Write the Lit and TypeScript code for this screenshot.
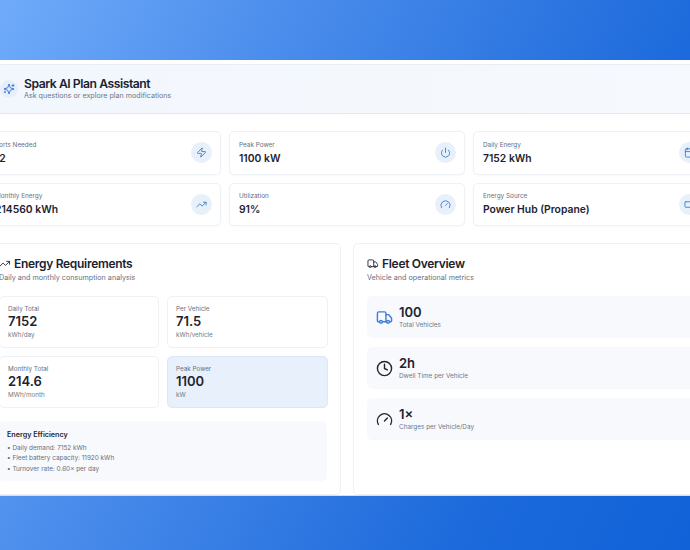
import { LitElement, html, css, svg } from "lit";
import { customElement } from "lit/decorators.js";

const ic = (body: unknown, cls = "") => html`<svg class=${cls} viewBox="0 0 24 24" fill="none" stroke="currentColor" stroke-width="2" stroke-linecap="round" stroke-linejoin="round">${body}</svg>`;
const zap = svg`<path d="M4 14a1 1 0 0 1-.78-1.63l9.9-10.2a.5.5 0 0 1 .86.46l-1.92 6.02A1 1 0 0 0 13 10h7a1 1 0 0 1 .78 1.63l-9.9 10.2a.5.5 0 0 1-.86-.46l1.92-6.02A1 1 0 0 0 11 14z"/>`;
const power = svg`<path d="M12 2v10"/><path d="M18.4 6.6a9 9 0 1 1-12.77.04"/>`;
const cal = svg`<path d="M8 2v4"/><path d="M16 2v4"/><rect x="3" y="4" width="18" height="18" rx="2"/><path d="M3 10h18"/>`;
const trend = svg`<path d="M22 7 13.5 15.5 8.5 10.5 2 17"/><path d="M16 7h6v6"/>`;
const gauge = svg`<path d="m12 14 4-4"/><path d="M3.34 19a10 10 0 1 1 17.32 0"/>`;
const plug = svg`<rect x="2" y="6" width="14" height="12" rx="2"/><path d="M22 11v2"/>`;
const truck = svg`<path d="M14 18V6a2 2 0 0 0-2-2H4a2 2 0 0 0-2 2v11a1 1 0 0 0 1 1h2"/><path d="M15 18H9"/><path d="M19 18h2a1 1 0 0 0 1-1v-3.65a1 1 0 0 0-.22-.62l-3.48-4.35A1 1 0 0 0 17.52 8H14"/><circle cx="17" cy="18" r="2"/><circle cx="7" cy="18" r="2"/>`;
const clock = svg`<circle cx="12" cy="12" r="10"/><path d="M12 6v6l4 2"/>`;
const sparkles = svg`<path d="M9.937 15.5A2 2 0 0 0 8.5 14.063l-6.135-1.582a.5.5 0 0 1 0-.962L8.5 9.936A2 2 0 0 0 9.937 8.5l1.582-6.135a.5.5 0 0 1 .963 0L14.063 8.5A2 2 0 0 0 15.5 9.937l6.135 1.581a.5.5 0 0 1 0 .964L15.5 14.063a2 2 0 0 0-1.437 1.437l-1.582 6.135a.5.5 0 0 1-.963 0z"/><path d="M20 3v4"/><path d="M22 5h-4"/><path d="M4 17v2"/><path d="M5 18H3"/>`;
const chevron = svg`<path d="m6 9 6 6 6-6"/>`;

const stats: [string, string, unknown][] = [
  ["Ports Needed", "12", zap],
  ["Peak Power", "1100 kW", power],
  ["Daily Energy", "7152 kWh", cal],
  ["Monthly Energy", "214560 kWh", trend],
  ["Utilization", "91%", gauge],
  ["Energy Source", "Power Hub (Propane)", plug],
];
const tiles = [
  ["Daily Total", "7152", "kWh/day", false],
  ["Per Vehicle", "71.5", "kWh/vehicle", false],
  ["Monthly Total", "214.6", "MWh/month", false],
  ["Peak Power", "1100", "kW", true],
] as const;
const fleet: [unknown, string, string, string][] = [
  [truck, "100", "Total Vehicles", "blue"],
  [clock, "2h", "Dwell Time per Vehicle", ""],
  [gauge, "1×", "Charges per Vehicle/Day", ""],
];

@customElement("app-root")
export class AppRoot extends LitElement {
  static styles = css`
    :host {
      display: block;
      width: 690px;
      height: 550px;
      overflow: hidden;
      font-family: Inter, "Liberation Sans", sans-serif;
      color: #1a202c;
      background: linear-gradient(115deg, #70abfa 0%, #4c8eec 30%, #2a74e0 62%, #1c6adc 75%, #1162d8 100%);
    }
    .panel {
      box-sizing: border-box;
      width: 724px;
      height: 436px;
      margin: 60px 0 0 -15px;
      background: #fff;
      padding-top: 4px;
      display: flex;
      flex-direction: column;
      border-bottom: 1px solid #cfe2f8;
    }
    svg { display: block; flex: none; }
    .header {
      height: 49.5px;
      box-sizing: border-box;
      display: flex;
      align-items: center;
      gap: 6.5px;
      padding: 0 8px 0 14.5px;
      background: linear-gradient(90deg, #f2f7fd, #f6f9fe);
      border-top: 1px solid #e8eef6;
      border-bottom: 1px solid #dfe7f2;
    }
    .spark {
      width: 18px;
      height: 18px;
      border-radius: 50%;
      background: #e6eefa;
      color: #3b7de0;
      display: flex;
      align-items: center;
      justify-content: center;
    }
    .spark svg { width: 12px; height: 12px; }
    .htext { flex: 1; margin-top: -2px; }
    .title { font-size: 12.2px; font-weight: 600; line-height: 15px; letter-spacing: -0.46px; color: #1b2230; }
    .sub { font-size: 7.15px; line-height: 9px; color: #6b7686; }
    .chev { width: 12px; height: 12px; color: #4c5665; margin-right: 1px; }
    .stats {
      display: grid;
      grid-template-columns: repeat(3, 236px);
      gap: 8px;
      margin-top: 17.5px;
    }
    .stat {
      box-sizing: border-box;
      height: 43.5px;
      border: 1px solid #eef1f5;
      border-radius: 5px;
      background: #fff;
      display: flex;
      align-items: center;
      justify-content: space-between;
      padding: 0 8px 0 9px;
      box-shadow: 0 1px 2px rgba(30, 50, 80, 0.03);
    }
    .stat .label { font-size: 6.4px; line-height: 9px; color: #667080; }
    .stat .value { font-size: 10.35px; font-weight: 600; line-height: 14px; margin-top: 1px; color: #1d2430; }
    .round {
      width: 21px;
      height: 21px;
      border-radius: 50%;
      background: #e8f0fa;
      color: #3f7fd6;
      display: flex;
      align-items: center;
      justify-content: center;
    }
    .round svg { width: 11px; height: 11px; }
    .cols {
      display: grid;
      grid-template-columns: 356px 356px;
      gap: 12px;
      margin-top: 17px;
    }
    .card {
      box-sizing: border-box;
      height: 252px;
      border: 1px solid #eef1f5;
      border-radius: 5px;
      padding: 12px 13px;
      background: #fff;
    }
    .chead { display: flex; align-items: center; gap: 3.5px; height: 15px; }
    .chead svg { width: 11.5px; height: 11.5px; color: #2b3340; }
    .chead .t { font-size: 12px; font-weight: 600; letter-spacing: -0.3px; line-height: 15px; color: #1b2230; }
    .csub { font-size: 7.2px; line-height: 9px; color: #667080; margin-top: 2px; }
    .tiles {
      display: grid;
      grid-template-columns: 160px 161px;
      gap: 8px;
      margin-top: 13.5px;
    }
    .tile {
      box-sizing: border-box;
      height: 52px;
      border: 1px solid #eef1f5;
      border-radius: 5px;
      padding: 8.5px 8px;
    }
    .tile.hi { background: #e7f0fb; border-color: #dce8f7; }
    .tile .l { font-size: 6.3px; line-height: 9px; color: #667080; }
    .tile .v { font-size: 13px; font-weight: 600; line-height: 15px; color: #1d2430; }
    .tile .u { font-size: 6.3px; line-height: 9px; color: #6f7988; margin-top: 2px; }
    .eff {
      margin-top: 13px;
      height: 60.5px;
      box-sizing: border-box;
      background: #f7f9fc;
      border-radius: 5px;
      padding: 9px 8px;
    }
    .eff .h { font-size: 7.2px; font-weight: 600; line-height: 10px; color: #222a36; margin-bottom: 3px; }
    .eff .li { font-size: 6.4px; line-height: 10.5px; color: #667080; }
    .rows { display: flex; flex-direction: column; gap: 9px; margin-top: 13.5px; }
    .row {
      height: 42px;
      box-sizing: border-box;
      background: #f7f9fc;
      border-radius: 5px;
      display: flex;
      align-items: center;
      gap: 6px;
      padding: 1px 8px 0 9px;
    }
    .row svg { width: 17px; height: 17px; color: #1f2733; }
    .row svg.blue { color: #3f7fdc; }
    .row .v { font-size: 13px; font-weight: 600; line-height: 15px; color: #1b2230; }
    .row .l { font-size: 6.4px; line-height: 9px; color: #6f7988; margin-top: 1px; }
  `;

  render() {
    return html`<div class="panel">
      <div class="header">
        <div class="spark">${ic(sparkles)}</div>
        <div class="htext">
          <div class="title">Spark AI Plan Assistant</div>
          <div class="sub">Ask questions or explore plan modifications</div>
        </div>
        ${ic(chevron, "chev")}
      </div>
      <div class="stats">
        ${stats.map(([l, v, i]) => html`<div class="stat">
          <div><div class="label">${l}</div><div class="value">${v}</div></div>
          <div class="round">${ic(i)}</div>
        </div>`)}
      </div>
      <div class="cols">
        <div class="card">
          <div class="chead">${ic(trend)}<span class="t">Energy Requirements</span></div>
          <div class="csub">Daily and monthly consumption analysis</div>
          <div class="tiles">
            ${tiles.map(([l, v, u, hi]) => html`<div class="tile ${hi ? "hi" : ""}">
              <div class="l">${l}</div><div class="v">${v}</div><div class="u">${u}</div>
            </div>`)}
          </div>
          <div class="eff">
            <div class="h">Energy Efficiency</div>
            <div class="li">• Daily demand: 7152 kWh</div>
            <div class="li">• Fleet battery capacity: 11920 kWh</div>
            <div class="li">• Turnover rate: 0.60× per day</div>
          </div>
        </div>
        <div class="card">
          <div class="chead">${ic(truck)}<span class="t">Fleet Overview</span></div>
          <div class="csub">Vehicle and operational metrics</div>
          <div class="rows">
            ${fleet.map(([i, v, l, c]) => html`<div class="row">
              ${ic(i, c)}
              <div><div class="v">${v}</div><div class="l">${l}</div></div>
            </div>`)}
          </div>
        </div>
      </div>
    </div>`;
  }
}
